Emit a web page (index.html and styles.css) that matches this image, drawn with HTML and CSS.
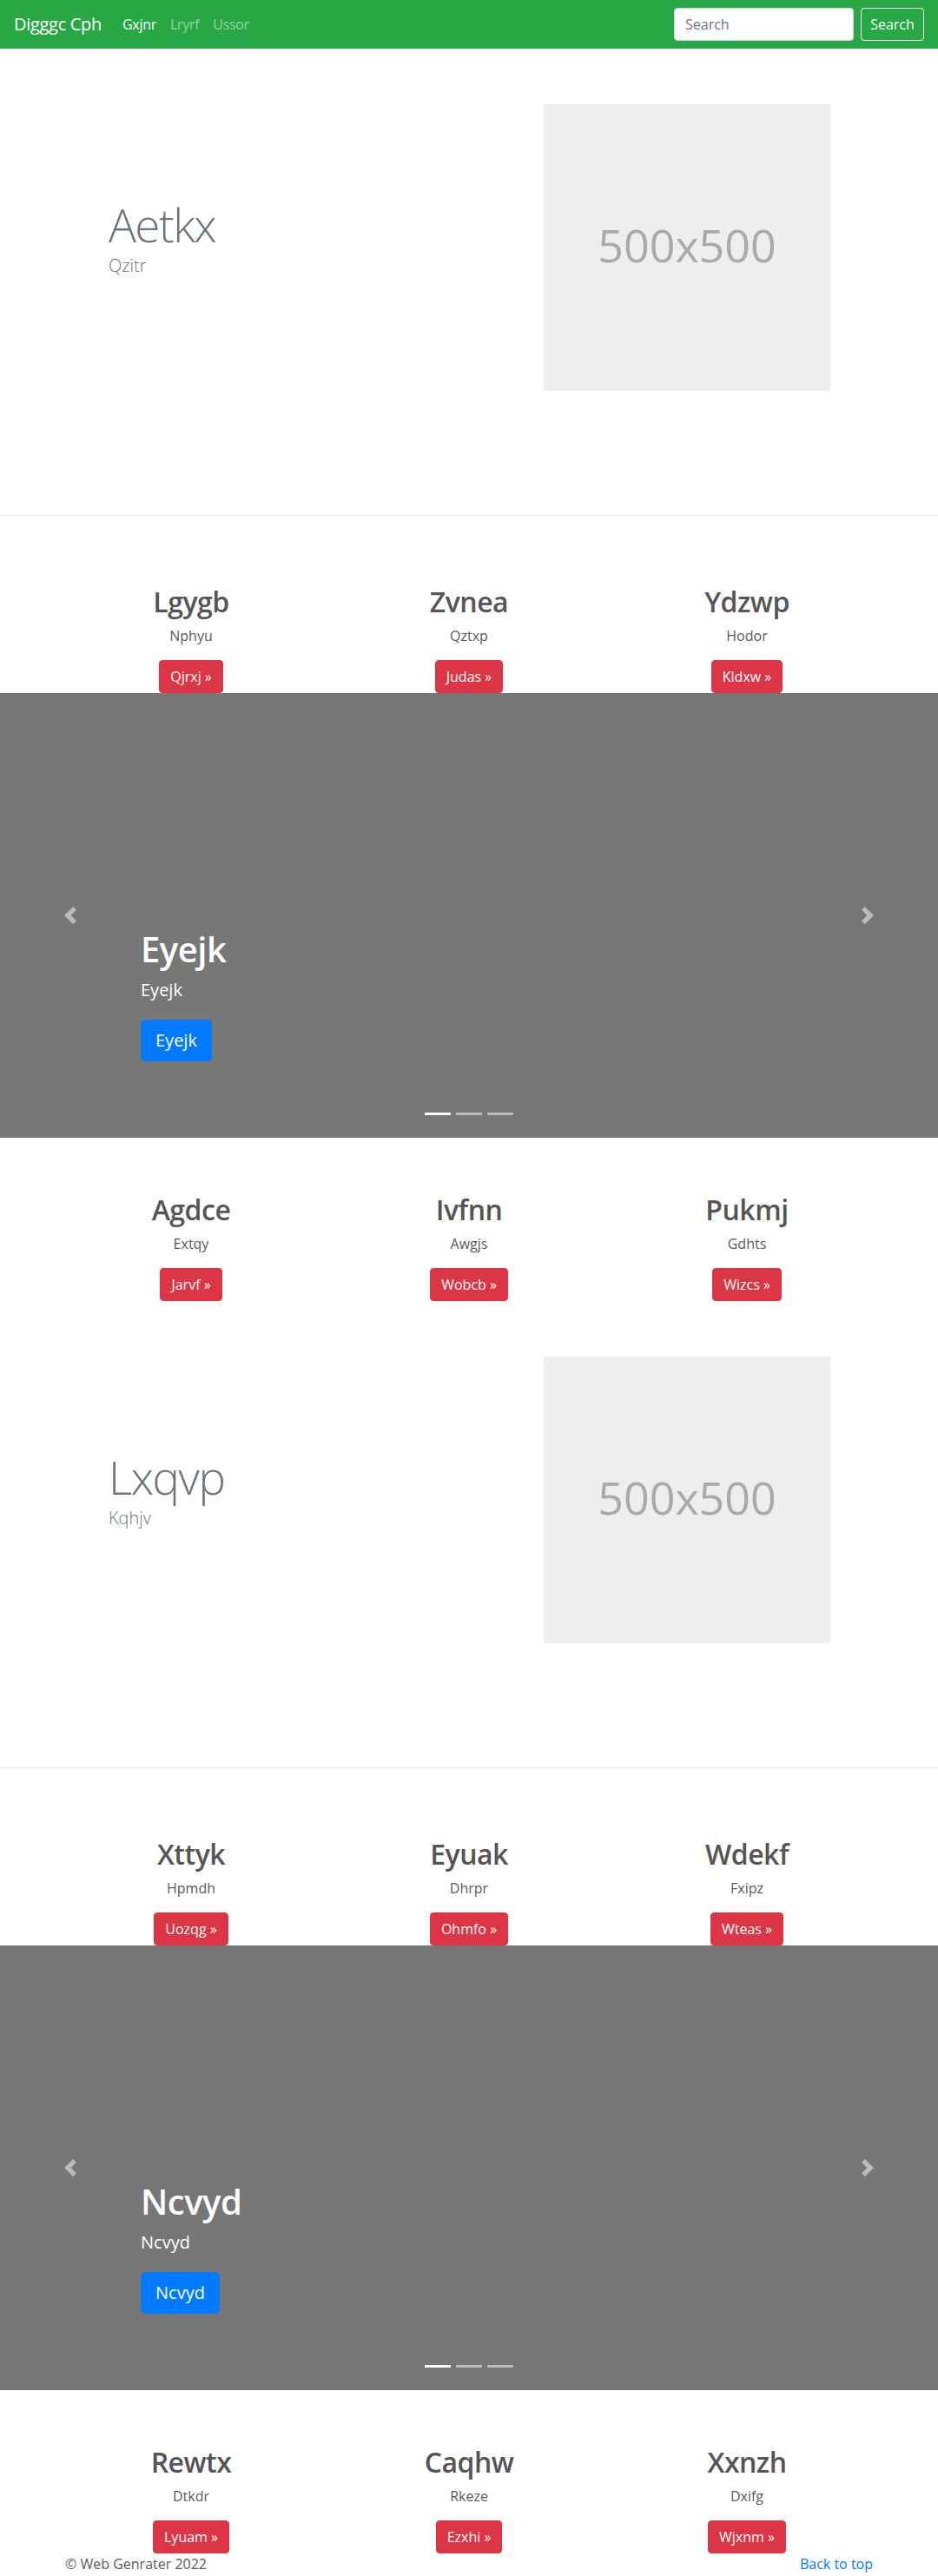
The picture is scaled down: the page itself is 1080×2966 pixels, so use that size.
FILE: index.html
```html
<!DOCTYPE html>
<html lang="en">
<head>
<meta charset="utf-8">
<title>Digggc Cph</title>
<link rel="stylesheet" href="styles.css">
</head>
<body>
<header class="navbar">
  <a class="brand" href="#">Digggc Cph</a>
  <nav class="nav">
    <a class="nav-link active" href="#">Gxjnr</a>
    <a class="nav-link" href="#">Lryrf</a>
    <a class="nav-link" href="#">Ussor</a>
  </nav>
  <form class="search">
    <input class="search-input" type="text" placeholder="Search">
    <button class="search-btn" type="button">Search</button>
  </form>
</header>

<main>
  <section class="hero">
    <div class="hero-text">
      <h1 class="hero-title">Aetkx</h1>
      <p class="hero-lead">Qzitr</p>
    </div>
    <div class="placeholder">500x500</div>
  </section>
  <hr class="divider">

  <section class="marketing after-divider">
    <div class="col"><h2>Lgygb</h2><p>Nphyu</p><p class="btn-row"><a class="btn-danger" href="#">Qjrxj &raquo;</a></p></div>
    <div class="col"><h2>Zvnea</h2><p>Qztxp</p><p class="btn-row"><a class="btn-danger" href="#">Judas &raquo;</a></p></div>
    <div class="col"><h2>Ydzwp</h2><p>Hodor</p><p class="btn-row"><a class="btn-danger" href="#">Kldxw &raquo;</a></p></div>
  </section>

  <section class="carousel">
    <div class="caption">
      <h1 class="caption-title">Eyejk</h1>
      <p class="caption-text">Eyejk</p>
      <p class="btn-row"><a class="btn-primary" href="#">Eyejk</a></p>
    </div>
    <a class="control prev" href="#"><svg width="20" height="20" viewBox="0 0 8 8"><path d="M5.25 0l-4 4 4 4 1.5-1.5L4.25 4l2.5-2.5L5.25 0z"/></svg></a>
    <a class="control next" href="#"><svg width="20" height="20" viewBox="0 0 8 8"><path d="M2.75 0l-1.5 1.5L3.75 4l-2.5 2.5L2.75 8l4-4-4-4z"/></svg></a>
    <ol class="indicators"><li class="active"></li><li></li><li></li></ol>
  </section>

  <section class="marketing after-carousel">
    <div class="col"><h2>Agdce</h2><p>Extqy</p><p class="btn-row"><a class="btn-danger" href="#">Jarvf &raquo;</a></p></div>
    <div class="col"><h2>Ivfnn</h2><p>Awgjs</p><p class="btn-row"><a class="btn-danger" href="#">Wobcb &raquo;</a></p></div>
    <div class="col"><h2>Pukmj</h2><p>Gdhts</p><p class="btn-row"><a class="btn-danger" href="#">Wizcs &raquo;</a></p></div>
  </section>

  <section class="hero">
    <div class="hero-text">
      <h1 class="hero-title">Lxqvp</h1>
      <p class="hero-lead">Kqhjv</p>
    </div>
    <div class="placeholder">500x500</div>
  </section>
  <hr class="divider">

  <section class="marketing after-divider">
    <div class="col"><h2>Xttyk</h2><p>Hpmdh</p><p class="btn-row"><a class="btn-danger" href="#">Uozqg &raquo;</a></p></div>
    <div class="col"><h2>Eyuak</h2><p>Dhrpr</p><p class="btn-row"><a class="btn-danger" href="#">Ohmfo &raquo;</a></p></div>
    <div class="col"><h2>Wdekf</h2><p>Fxipz</p><p class="btn-row"><a class="btn-danger" href="#">Wteas &raquo;</a></p></div>
  </section>

  <section class="carousel">
    <div class="caption">
      <h1 class="caption-title">Ncvyd</h1>
      <p class="caption-text">Ncvyd</p>
      <p class="btn-row"><a class="btn-primary" href="#">Ncvyd</a></p>
    </div>
    <a class="control prev" href="#"><svg width="20" height="20" viewBox="0 0 8 8"><path d="M5.25 0l-4 4 4 4 1.5-1.5L4.25 4l2.5-2.5L5.25 0z"/></svg></a>
    <a class="control next" href="#"><svg width="20" height="20" viewBox="0 0 8 8"><path d="M2.75 0l-1.5 1.5L3.75 4l-2.5 2.5L2.75 8l4-4-4-4z"/></svg></a>
    <ol class="indicators"><li class="active"></li><li></li><li></li></ol>
  </section>

  <section class="marketing after-carousel">
    <div class="col"><h2>Rewtx</h2><p>Dtkdr</p><p class="btn-row"><a class="btn-danger" href="#">Lyuam &raquo;</a></p></div>
    <div class="col"><h2>Caqhw</h2><p>Rkeze</p><p class="btn-row"><a class="btn-danger" href="#">Ezxhi &raquo;</a></p></div>
    <div class="col"><h2>Xxnzh</h2><p>Dxifg</p><p class="btn-row"><a class="btn-danger" href="#">Wjxnm &raquo;</a></p></div>
  </section>

  <footer class="footer">
    <p class="copy">&copy; Web Genrater 2022</p>
    <a class="back" href="#">Back to top</a>
  </footer>
</main>
</body>
</html>
```

FILE: styles.css
```css
* { box-sizing: border-box; }

body {
  margin: 0;
  font-family: "Open Sans", "Noto Sans", "DejaVu Sans", sans-serif;
  font-size: 16px;
  line-height: 1.5;
  color: #5a5a5a;
  background: #fff;
}

a { text-decoration: none; }

/* Navbar */
.navbar {
  height: 56px;
  background: #28a745;
  display: flex;
  align-items: center;
  padding: 0 16px;
}
.brand {
  font-size: 20px;
  line-height: 30px;
  color: #fff;
  margin-right: 16px;
  letter-spacing: -0.3px;
}
.nav { display: flex; }
.nav-link {
  padding: 8px;
  color: rgba(255, 255, 255, 0.5);
  font-size: 16px;
  line-height: 24px;
  letter-spacing: -0.3px;
}
.nav-link.active { color: #fff; }
.search {
  margin-left: auto;
  display: flex;
  align-items: center;
}
.search-input {
  width: 207px;
  height: 38px;
  padding: 6px 12px;
  font: inherit;
  font-size: 16px;
  color: #495057;
  background: #fff;
  border: 1px solid #ced4da;
  border-radius: 4px;
  margin-right: 8px;
}
.search-input::placeholder { color: #6c757d; }
.search-btn {
  width: 73px;
  height: 38px;
  padding: 6px 0;
  font: inherit;
  font-size: 16px;
  line-height: 24px;
  text-align: center;
  color: #f8f9fa;
  background: transparent;
  border: 1px solid #f8f9fa;
  border-radius: 4px;
}

/* Hero / featurette */
.hero {
  height: 537px;
  display: flex;
  align-items: flex-start;
  padding: 64px 124px 0 125px;
}
.hero-text {
  flex: 1;
  margin-top: 107px;
}
.hero-title {
  margin: 0;
  font-size: 53px;
  font-weight: 300;
  line-height: 64px;
  letter-spacing: -1.5px;
  color: #6c757d;
}
.hero-lead {
  margin: 0;
  font-size: 20px;
  font-weight: 300;
  line-height: 30px;
  color: #6c757d;
}
.placeholder {
  width: 330px;
  height: 330px;
  background: #eee;
  color: #aaa;
  font-size: 52px;
  display: flex;
  align-items: center;
  justify-content: center;
  padding-bottom: 6px;
}

.divider {
  margin: 0;
  border: 0;
  border-top: 1px solid rgba(0, 0, 0, 0.1);
  height: 0;
}

/* Marketing columns */
.marketing {
  width: 960px;
  margin: 0 auto;
  display: grid;
  grid-template-columns: repeat(3, 1fr);
  text-align: center;
}
.after-divider { padding-top: 79px; }
.after-carousel { padding-top: 63px; }
.col { padding: 0 15px; }
.col h2 {
  margin: 0 0 8px;
  font-size: 32px;
  font-weight: 600;
  line-height: 39px;
  letter-spacing: -0.5px;
  color: #555;
}
.col p {
  margin: 0 12px 16px;
  line-height: 24px;
}
.col p.btn-row { margin-bottom: 0; }
.btn-danger {
  display: inline-block;
  height: 38px;
  padding: 6px 12px;
  line-height: 24px;
  font-size: 16px;
  color: #fff;
  background: #dc3545;
  border: 1px solid #dc3545;
  border-radius: 4px;
}

/* Carousel */
.carousel {
  position: relative;
  height: 512px;
  background: #777;
  display: flex;
  flex-direction: column;
  justify-content: flex-end;
  padding: 0 162px 88px;
  color: #fff;
}
.caption-title {
  margin: 0 0 8px;
  font-size: 40px;
  font-weight: 600;
  line-height: 48px;
  letter-spacing: -0.5px;
}
.caption-text {
  margin: 0 0 19px;
  font-size: 20px;
  line-height: 30px;
}
.btn-row { margin: 0; }
.btn-primary {
  display: inline-block;
  height: 48px;
  padding: 8px 16px;
  font-size: 20px;
  line-height: 30px;
  color: #fff;
  background: #007bff;
  border: 1px solid #007bff;
  border-radius: 5px;
}
.control {
  position: absolute;
  top: 0;
  bottom: 0;
  width: 162px;
  display: flex;
  align-items: center;
  justify-content: center;
  opacity: 0.5;
}
.control svg { fill: #fff; display: block; }
.control.prev { left: 0; }
.control.next { right: 0; }
.indicators {
  position: absolute;
  left: 0;
  right: 0;
  bottom: 26px;
  margin: 0;
  padding: 0;
  list-style: none;
  display: flex;
  justify-content: center;
}
.indicators li {
  width: 30px;
  height: 3px;
  margin: 0 3px;
  background: #fff;
  opacity: 0.5;
}
.indicators li.active { opacity: 1; }

/* Footer */
.footer {
  width: 960px;
  margin: 0 auto;
  padding: 0 15px;
  display: flex;
  justify-content: space-between;
  line-height: 24px;
}
.copy { margin: 0; }
.back { color: #007bff; }
```
